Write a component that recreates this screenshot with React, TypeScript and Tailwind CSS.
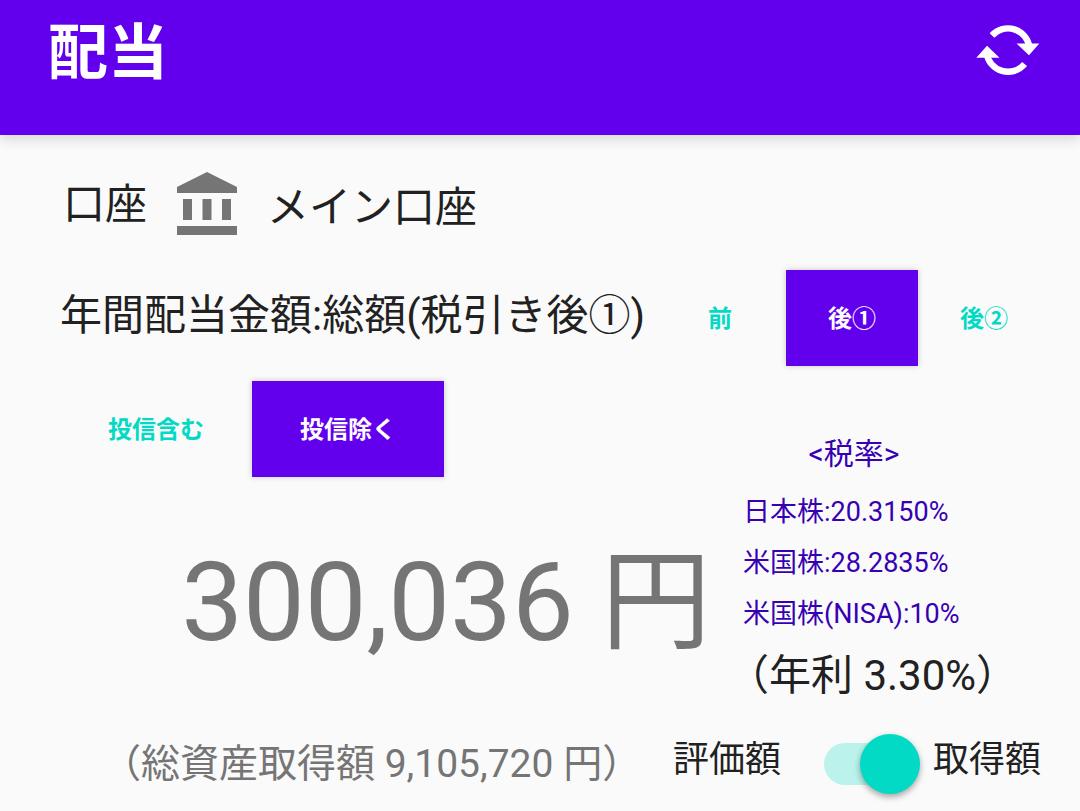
import { useState } from "react";

const TAX_RATES = [
  { label: "日本株", rate: "20.3150%" },
  { label: "米国株", rate: "28.2835%" },
  { label: "米国株(NISA)", rate: "10%" },
];

const TAX_MODES = ["前", "後①", "後②"];
const FUND_MODES = ["投信含む", "投信除く"];

function SyncIcon() {
  return (
    <svg viewBox="0 0 64 50" className="w-16 h-[50px]" aria-hidden="true">
      <g fill="none" stroke="currentColor" strokeWidth="6.4">
        <path d="M16 10.5A21.6 21.6 0 0 1 53.4 22" />
        <path d="M48.6 39A21.6 21.6 0 0 1 10.6 28" />
      </g>
      <path fill="currentColor" d="M40.5 18.5H63.3L53 30.2zM0.3 32.7H23.5L11 20.8z" />
    </svg>
  );
}

function BankIcon() {
  return (
    <svg viewBox="0 0 60 63" className="w-[60px] h-[63px] text-[#757575]" aria-hidden="true">
      <path
        fill="currentColor"
        d="M30 0L60 15V21H0V15zM6 27h9v21H6zM25.5 27h9v21h-9zM45 27h9v21h-9zM0 54h60v9H0z"
      />
    </svg>
  );
}

type SegmentsProps = {
  items: string[];
  value: string;
  onChange: (v: string) => void;
  itemClass: string;
};

function Segments({ items, value, onChange, itemClass }: SegmentsProps) {
  return (
    <div className="flex shrink-0">
      {items.map((item) => {
        const active = item === value;
        return (
          <button
            key={item}
            type="button"
            aria-pressed={active}
            onClick={() => onChange(item)}
            className={`h-24 pt-0.5 text-2xl font-bold ${itemClass} ${
              active ? "bg-[#6200ee] text-white shadow-[0_0_6px_rgba(0,0,0,0.2)]" : "text-[#03dac5]"
            }`}
          >
            {item}
          </button>
        );
      })}
    </div>
  );
}

export default function App() {
  const [taxMode, setTaxMode] = useState("後①");
  const [fundMode, setFundMode] = useState("投信除く");
  const [useCost, setUseCost] = useState(true);

  return (
    <div className="min-h-screen bg-[#fafafa] text-[#212121] font-['Roboto','Noto_Sans_CJK_JP',sans-serif] whitespace-nowrap">
      {/* App bar */}
      <header className="flex items-start justify-between h-[135px] pl-12 pr-10 bg-[#6200ee] text-white shadow-[0_4px_12px_rgba(0,0,0,0.15)]">
        <h1 className="mt-2.5 text-[60px] leading-[88px] font-bold">配当</h1>
        <button type="button" aria-label="更新" className="mt-[25px]">
          <SyncIcon />
        </button>
      </header>

      <main>
        {/* Account */}
        <section className="flex items-center h-[135px] pt-0.5 pl-[63px] text-[42px] leading-[60px]">
          <span className="pt-0.5">口座</span>
          <span className="ml-[30px]">
            <BankIcon />
          </span>
          <span className="ml-[30px] pt-2">メイン口座</span>
        </section>

        {/* Yearly dividend */}
        <section className="flex items-center justify-between pl-[60px] pr-[30px]">
          <h2 className="text-[42px] leading-[60px] pb-1">年間配当金額:総額(税引き後①)</h2>
          <Segments items={TAX_MODES} value={taxMode} onChange={setTaxMode} itemClass="w-[132px]" />
        </section>

        <section className="flex justify-between mt-[15px] pl-[60px]">
          <div className="flex flex-col flex-1">
            <Segments items={FUND_MODES} value={fundMode} onChange={setFundMode} itemClass="w-48" />
            <p className="mt-[46px] pr-8 text-right text-[110px] leading-[160px] text-[#757575]">
              300,036 円
            </p>
          </div>
          <div className="w-[337px] pt-[51px]">
            <h3 className="w-[222px] text-center text-[30px] leading-[44px] text-[#3700b3]">
              &lt;税率&gt;
            </h3>
            <ul className="mt-[11px] text-[27px] leading-[51px] text-[#3700b3]">
              {TAX_RATES.map((t) => (
                <li key={t.label}>
                  {t.label}:{t.rate}
                </li>
              ))}
            </ul>
            <p className="mt-1.5 -ml-4 text-[42px] leading-[60px]">（年利 3.30%）</p>
          </div>
        </section>

        {/* Total cost and valuation switch */}
        <section className="flex items-center justify-between pl-[102px] pr-[39px] pt-6">
          <p className="text-[39px] leading-[60px] text-[#757575]">（総資産取得額 9,105,720 円）</p>
          <label className="flex items-center text-[36px] leading-[60px]">
            <span className="pb-2">評価額</span>
            <input
              type="checkbox"
              role="switch"
              checked={useCost}
              onChange={(e) => setUseCost(e.target.checked)}
              className="peer sr-only"
            />
            <span className="flex items-center w-24 h-[42px] ml-[43px] rounded-full bg-[#03dac5]/25 justify-start peer-checked:justify-end">
              <span className="size-[60px] rounded-full bg-[#03dac5] shadow-[0_3px_6px_rgba(0,0,0,0.35)]" />
            </span>
            <span className="ml-[13px] pb-2">取得額</span>
          </label>
        </section>
      </main>
    </div>
  );
}
